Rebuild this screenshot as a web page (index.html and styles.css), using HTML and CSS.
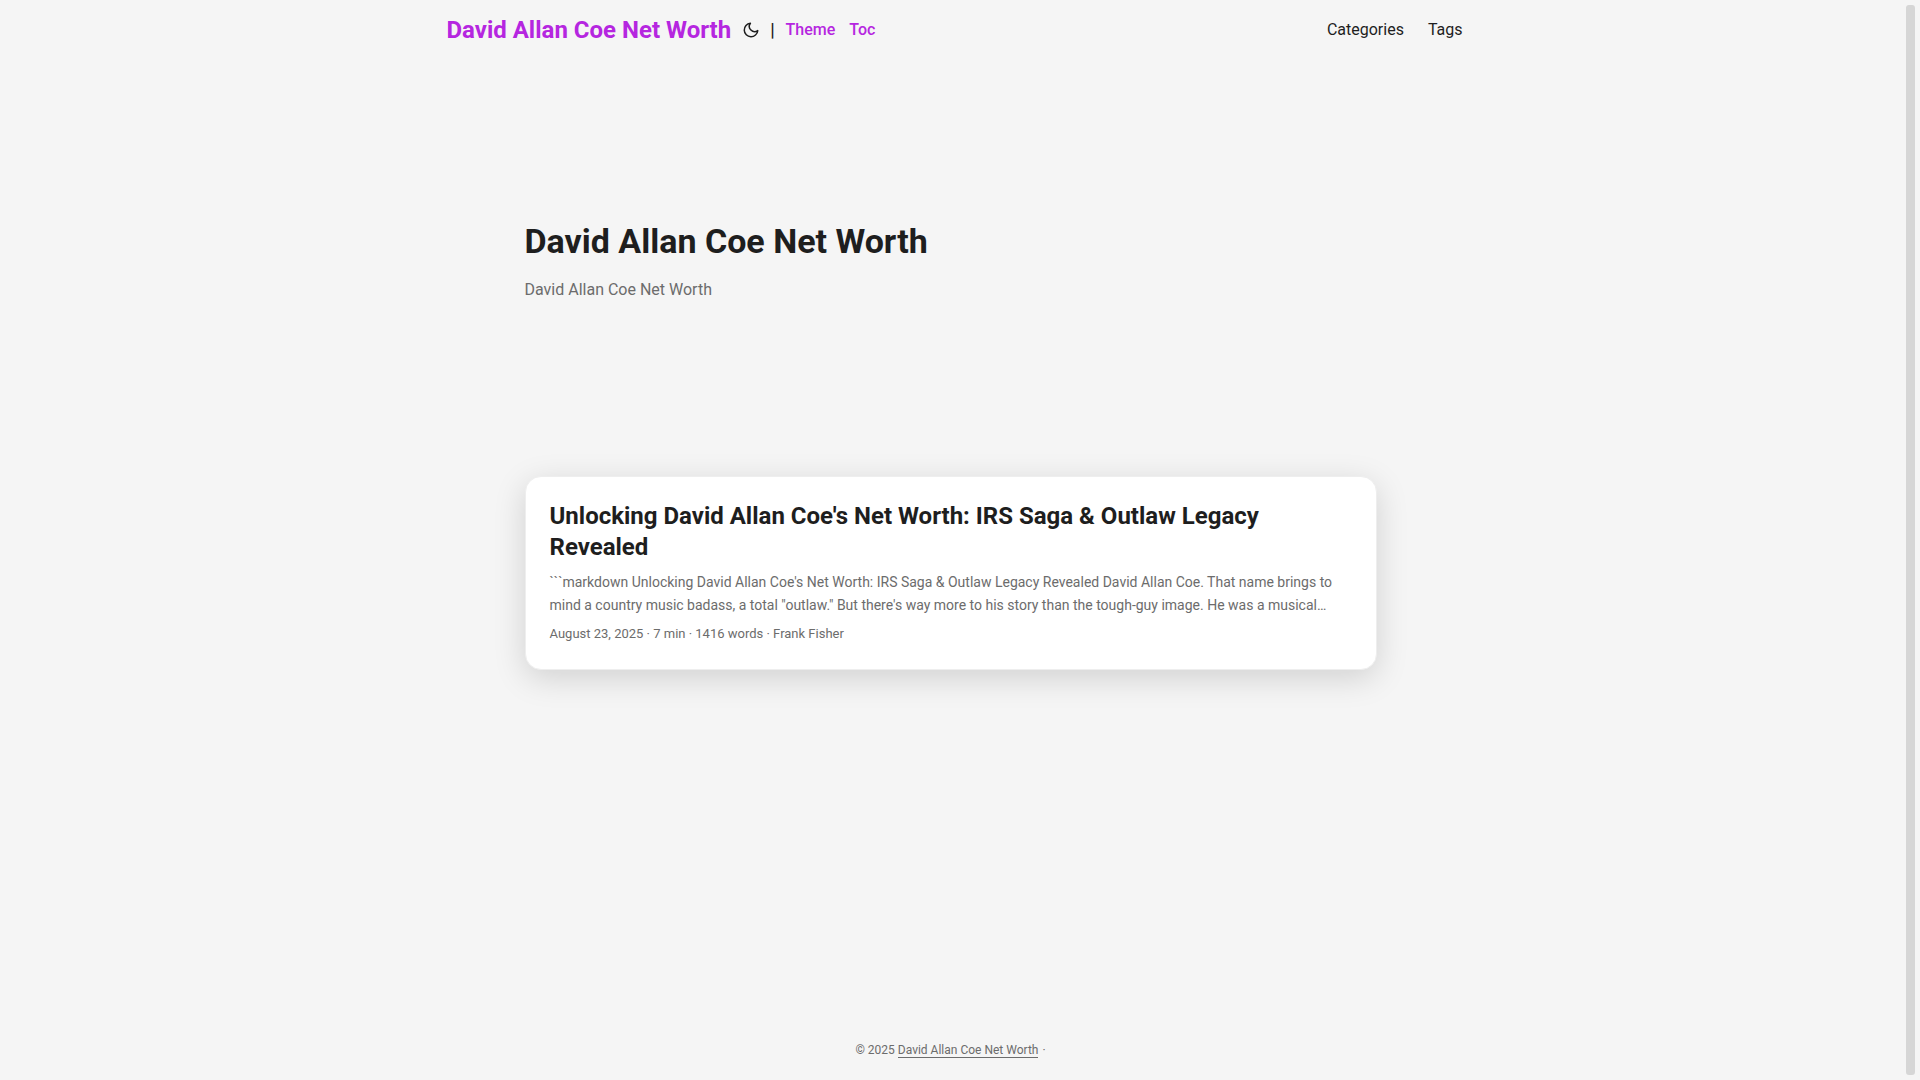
FILE: index.html
```
<!DOCTYPE html>
<html lang="en">
<head>
<meta charset="UTF-8">
<meta name="viewport" content="width=device-width, initial-scale=1.0">
<title>David Allan Coe Net Worth</title>
<link rel="stylesheet" href="styles.css">
</head>
<body>
  <header class="header">
    <nav class="nav">
      <div class="logo">
        <a class="logo-link" href="#">David Allan Coe Net Worth</a>
        <button class="theme-toggle" type="button" aria-label="Toggle theme">
          <svg width="18" height="18" viewBox="0 0 24 24" fill="none" stroke="currentColor" stroke-width="2" stroke-linecap="round" stroke-linejoin="round">
            <path d="M21 12.79A9 9 0 1 1 11.21 3 7 7 0 0 0 21 12.79z"></path>
          </svg>
        </button>
        <span class="divider">|</span>
        <a class="sub-link" href="#">Theme</a>
        <a class="sub-link" href="#">Toc</a>
      </div>
      <ul class="menu">
        <li><a href="#">Categories</a></li>
        <li><a href="#">Tags</a></li>
      </ul>
    </nav>
  </header>

  <main class="main">
    <article class="first-entry">
      <h1>David Allan Coe Net Worth</h1>
      <p>David Allan Coe Net Worth</p>
    </article>

    <article class="post-entry">
      <h2>Unlocking David Allan Coe's Net Worth: IRS Saga &amp; Outlaw Legacy Revealed</h2>
      <p class="entry-content">```markdown Unlocking David Allan Coe's Net Worth: IRS Saga &amp; Outlaw Legacy Revealed David Allan Coe. That name brings to mind a country music badass, a total "outlaw." But there's way more to his story than the tough-guy image. He was a musical…</p>
      <footer class="entry-footer">August 23, 2025&nbsp;·&nbsp;7 min&nbsp;·&nbsp;1416 words&nbsp;·&nbsp;Frank Fisher</footer>
    </article>
  </main>

  <footer class="footer">
    <span>© 2025 <a href="#">David Allan Coe Net Worth</a></span> ·
  </footer>

  <div class="scrollbar" aria-hidden="true"></div>
</body>
</html>
```

FILE: styles.css
```
:root {
  --gap: 24px;
  --header-height: 60px;
  --footer-height: 60px;
  --scrollbar-width: 19px;
  --bg: #f5f5f5;
  --entry: #fff;
  --primary: #1e1e1e;
  --secondary: #6c6c6c;
  --accent: #b526e0;
}
* {
  box-sizing: border-box;
  margin: 0;
  padding: 0;
}
html {
  background: var(--bg);
  scrollbar-width: none;
}
body {
  display: flex;
  flex-direction: column;
  min-height: 100vh;
  padding-right: var(--scrollbar-width);
  font-family: Roboto, "Liberation Sans", sans-serif;
  font-size: 16px;
  line-height: 26px;
  color: var(--primary);
  background: var(--bg);
}
a {
  color: inherit;
  text-decoration: none;
}

/* scrollbar */
.scrollbar {
  position: fixed;
  top: 0;
  right: 0;
  bottom: 0;
  width: var(--scrollbar-width);
  background: #d6d6d6;
  border: 5px solid var(--bg);
  border-radius: 8px;
}

/* header */
.nav {
  display: flex;
  justify-content: space-between;
  max-width: 1072px;
  margin: 0 auto;
  padding: 0 var(--gap);
  line-height: var(--header-height);
}
.logo {
  display: flex;
  align-items: center;
  height: var(--header-height);
  padding-left: 8px;
}
.logo-link {
  font-size: 24px;
  font-weight: 700;
  color: var(--accent);
}
.theme-toggle {
  display: flex;
  margin: 0 4px 0 5px;
  padding: 1px 6px;
  border: 0;
  background: none;
  color: var(--primary);
  cursor: pointer;
}
.divider {
  padding-right: 11px;
  font-size: 18px;
  font-weight: 500;
}
.sub-link {
  margin-right: 14px;
  font-weight: 500;
  color: var(--accent);
}
.menu {
  display: flex;
  gap: var(--gap);
  list-style: none;
}

/* content */
.main {
  flex: 1;
  width: 100%;
  max-width: 900px;
  margin: 0 auto;
  padding: var(--gap);
}
.first-entry {
  display: flex;
  flex-direction: column;
  justify-content: center;
  min-height: 320px;
  margin: var(--gap) 0 48px;
}
.first-entry h1 {
  font-size: 34px;
  line-height: 44px;
}
.first-entry p {
  margin: 14px 0;
  color: var(--secondary);
}
.post-entry {
  padding: var(--gap);
  background: var(--entry);
  border: 1px solid #eee;
  border-radius: 16px;
  box-shadow: 0 8px 32px rgba(0, 0, 0, 0.15);
}
.post-entry h2 {
  font-size: 24px;
  line-height: 31px;
}
.entry-content {
  margin: 8px 0 6px;
  font-size: 14px;
  line-height: 23px;
  color: var(--secondary);
}
.entry-footer {
  font-size: 13px;
  line-height: 22px;
  color: var(--secondary);
}

/* footer */
.footer {
  height: var(--footer-height);
  padding: 18px var(--gap);
  font-size: 12px;
  line-height: 24px;
  text-align: center;
  color: var(--secondary);
}
.footer a {
  border-bottom: 1px solid var(--secondary);
}
.footer span {
  margin-right: 1px;
}
```
